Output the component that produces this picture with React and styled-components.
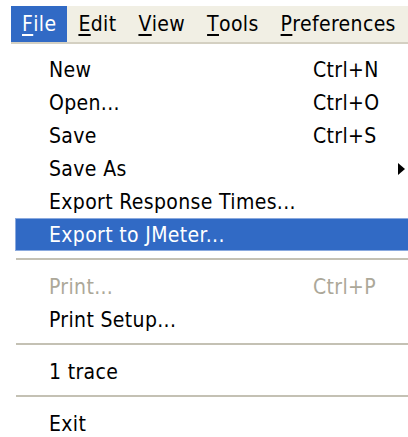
import styled, { createGlobalStyle } from "styled-components";

const GlobalStyle = createGlobalStyle`
  html, body {
    margin: 0;
    padding: 0;
    background: #ffffff;
    overflow: hidden;
  }
  body {
    font-family: "DejaVu Sans Condensed", "Liberation Sans", sans-serif;
    font-size: 21px;
    letter-spacing: 0.35px;
    color: #000000;
  }
`;

const menuBar = [
  { key: "F", rest: "ile", open: true },
  { key: "E", rest: "dit" },
  { key: "V", rest: "iew" },
  { key: "T", rest: "ools" },
  { key: "P", rest: "references" },
];

const fileMenu = [
  { label: "New", shortcut: "Ctrl+N" },
  { label: "Open...", shortcut: "Ctrl+O" },
  { label: "Save", shortcut: "Ctrl+S" },
  { label: "Save As", submenu: true },
  { label: "Export Response Times..." },
  { label: "Export to JMeter...", active: true },
  { separator: true },
  { label: "Print...", shortcut: "Ctrl+P", disabled: true },
  { label: "Print Setup..." },
  { separator: true },
  { label: "1 trace" },
  { separator: true },
  { label: "Exit" },
];

const App = () => {
  return (
    <>
      <GlobalStyle />
      <Page>
        <MenuBar>
          {menuBar.map((m) => (
            <BarItem key={m.key} open={m.open}>
              <Key>{m.key}</Key>
              {m.rest}
            </BarItem>
          ))}
        </MenuBar>
        <Dropdown>
          {fileMenu.map((item, i) =>
            item.separator ? (
              <Separator key={i} />
            ) : (
              <Item key={i} active={item.active} disabled={item.disabled}>
                <Label>{item.label}</Label>
                <Shortcut>{item.shortcut}</Shortcut>
                <ArrowCell>{item.submenu && <Arrow />}</ArrowCell>
              </Item>
            )
          )}
        </Dropdown>
      </Page>
    </>
  );
};

const Page = styled.div`
  padding: 6px 0 0 11px;
  width: 397px;
`;

const MenuBar = styled.div`
  display: flex;
  height: 36px;
  background-color: #f1efe4;
  border-bottom: 2px solid #d4d0c2;
`;

const BarItem = styled.div`
  display: flex;
  align-items: center;
  padding: 0 11px;
  background-color: ${(props) => (props.open ? "#316ac5" : "transparent")};
  color: ${(props) => (props.open ? "#ffffff" : "#000000")};
`;

const Key = styled.span`
  text-decoration: underline;
  text-decoration-thickness: 2px;
  text-underline-offset: 3px;
`;

const Dropdown = styled.div`
  display: flex;
  flex-direction: column;
  padding: 9px 0 0 4px;
  background-color: #ffffff;
`;

const Item = styled.div`
  display: grid;
  grid-template-columns: 264px 1fr 20px;
  align-items: center;
  height: 33px;
  box-sizing: border-box;
  padding-left: 34px;
  background-color: ${(props) => (props.active ? "#316ac5" : "transparent")};
  box-shadow: ${(props) =>
    props.active
      ? "inset 0 1px 0 #8aa9de, inset 0 -1px 0 #8aa9de, inset 1px 0 0 #8aa9de"
      : "none"};
  color: ${(props) =>
    props.active ? "#ffffff" : props.disabled ? "#aca899" : "#000000"};
`;

const Label = styled.span`
  white-space: nowrap;
`;

const Shortcut = styled.span`
  white-space: nowrap;
`;

const ArrowCell = styled.span`
  display: flex;
  align-items: center;
`;

const Arrow = styled.span`
  width: 0;
  height: 0;
  margin-left: 10px;
  border-top: 6px solid transparent;
  border-bottom: 6px solid transparent;
  border-left: 7px solid #000000;
`;

const Separator = styled.div`
  height: 2px;
  margin: 7px 0 10px 1px;
  background-color: #c4c1b4;
`;

export default App;
